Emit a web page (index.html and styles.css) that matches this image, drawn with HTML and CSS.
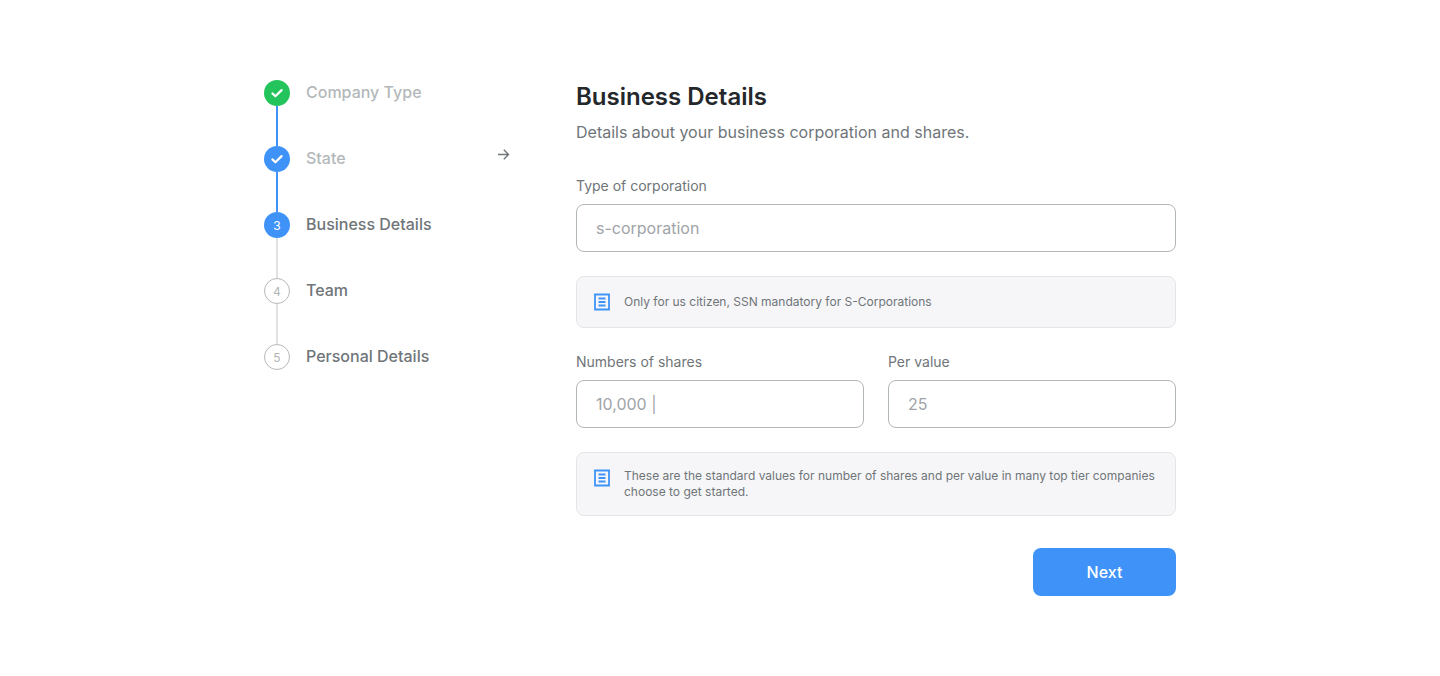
FILE: index.html
```html
<!DOCTYPE html>
<html lang="en">
<head>
  <meta charset="UTF-8">
  <meta name="viewport" content="width=device-width, initial-scale=1">
  <title>Business Details</title>
  <link rel="stylesheet" href="styles.css">
</head>
<body>
  <div class="wizard">
    <nav aria-label="Progress">
      <ol class="steps">
        <li class="step done first">
          <div class="track">
            <span class="marker"><svg viewBox="0 0 26 26"><path d="M8.4 13.4 L11.4 16.3 L17.6 10.1"/></svg></span>
            <span class="line"></span>
          </div>
          <span class="step-name">Company Type</span>
        </li>
        <li class="step done">
          <div class="track">
            <span class="marker"><svg viewBox="0 0 26 26"><path d="M8.4 13.4 L11.4 16.3 L17.6 10.1"/></svg></span>
            <span class="line"></span>
          </div>
          <span class="step-name">State</span>
          <svg class="arrow" viewBox="0 0 16 16"><path d="M2 8.5 H12.5 M7.8 3.8 L12.5 8.5 L7.8 13.2"/></svg>
        </li>
        <li class="step current" aria-current="step">
          <div class="track">
            <span class="marker">3</span>
            <span class="line"></span>
          </div>
          <span class="step-name">Business Details</span>
        </li>
        <li class="step">
          <div class="track">
            <span class="marker">4</span>
            <span class="line"></span>
          </div>
          <span class="step-name">Team</span>
        </li>
        <li class="step">
          <div class="track">
            <span class="marker">5</span>
          </div>
          <span class="step-name">Personal Details</span>
        </li>
      </ol>
    </nav>

    <main>
      <h1>Business Details</h1>
      <p class="intro">Details about your business corporation and shares.</p>

      <form class="form">
        <div class="field">
          <label for="type">Type of corporation</label>
          <input id="type" type="text" placeholder="s-corporation">
        </div>

        <div class="note">
          <svg class="note-icon" viewBox="0 0 20 20"><path d="M3 2.5 H17 V17.5 H3 Z M6.5 6.5 H13.5 M6.5 10 H13.5 M6.5 13.5 H13.5"/></svg>
          <p>Only for us citizen, SSN mandatory for S-Corporations</p>
        </div>

        <div class="row">
          <div class="field">
            <label for="shares">Numbers of shares</label>
            <input id="shares" type="text" placeholder="10,000 |">
          </div>
          <div class="field">
            <label for="value">Per value</label>
            <input id="value" type="text" placeholder="25">
          </div>
        </div>

        <div class="note">
          <svg class="note-icon" viewBox="0 0 20 20"><path d="M3 2.5 H17 V17.5 H3 Z M6.5 6.5 H13.5 M6.5 10 H13.5 M6.5 13.5 H13.5"/></svg>
          <p>These are the standard values for number of shares and per value in many top tier companies choose to get started.</p>
        </div>

        <button type="button" class="next">Next</button>
      </form>
    </main>
  </div>
</body>
</html>
```
FILE: styles.css
```css
* {
  box-sizing: border-box;
}
body {
  margin: 0;
  background: #fff;
  color: #6f7579;
  font-family: Inter, "Liberation Sans", sans-serif;
}
.wizard {
  display: grid;
  grid-template-columns: 248px 1fr;
  gap: 64px;
  max-width: 912px;
  margin: 0 auto;
  padding: 80px 0;
}

/* Steps */
.steps {
  list-style: none;
  margin: 0;
  padding: 0;
}
.step {
  display: flex;
  align-items: flex-start;
  gap: 16px;
  font-size: 16px;
  font-weight: 500;
}
.track {
  display: flex;
  flex-direction: column;
  align-items: center;
}
.marker {
  display: flex;
  align-items: center;
  justify-content: center;
  width: 26px;
  height: 26px;
  border: 1px solid #b5b9bb;
  border-radius: 50%;
  color: #b0b5b8;
  font-size: 12px;
  font-weight: 400;
}
.line {
  width: 2px;
  height: 40px;
  background: #dfe1e2;
}
.step-name {
  line-height: 24px;
}
.done .marker,
.current .marker {
  border: 0;
  background: #3f93f8;
  color: #fff;
}
.first .marker {
  background: #24c45c;
}
.done .line {
  background: #3f93f8;
}
.done .step-name {
  color: #b3b8ba;
}
.marker svg {
  width: 26px;
  height: 26px;
  fill: none;
  stroke: #fff;
  stroke-width: 2.2;
  stroke-linecap: round;
  stroke-linejoin: round;
}
.arrow {
  width: 16px;
  height: 16px;
  margin-left: auto;
  fill: none;
  stroke: #6f7579;
  stroke-width: 1.4;
}

/* Form */
h1 {
  margin: 0 0 6px;
  color: #25282b;
  font-size: 24px;
  font-weight: 600;
  line-height: 34px;
}
.intro {
  margin: 0 0 32px;
  font-size: 16px;
  line-height: 24px;
}
.form {
  display: flex;
  flex-direction: column;
  gap: 24px;
}
.row {
  display: grid;
  grid-template-columns: 1fr 1fr;
  gap: 24px;
}
.field {
  display: flex;
  flex-direction: column;
  gap: 8px;
}
label {
  font-size: 14px;
  line-height: 20px;
}
input {
  width: 100%;
  height: 48px;
  padding: 0 19px;
  border: 1px solid #b1b6b9;
  border-radius: 8px;
  background: #fff;
  color: #52575c;
  font-family: inherit;
  font-size: 16px;
}
input::placeholder {
  color: #a0a4a8;
  opacity: 1;
}
.note {
  display: flex;
  align-items: flex-start;
  gap: 12px;
  padding: 15px;
  border: 1px solid #e3e6e8;
  border-radius: 8px;
  background: #f6f6f8;
}
.note p {
  align-self: center;
  margin: 0;
  font-size: 12px;
  line-height: 16px;
}
.note-icon {
  flex: none;
  width: 20px;
  height: 20px;
  fill: none;
  stroke: #3f93f8;
  stroke-width: 1.8;
}
.next {
  align-self: flex-end;
  width: 143px;
  height: 48px;
  margin-top: 8px;
  border: 0;
  border-radius: 8px;
  background: #3f93f8;
  color: #fff;
  font-family: inherit;
  font-size: 16px;
  font-weight: 500;
  cursor: pointer;
}
```
